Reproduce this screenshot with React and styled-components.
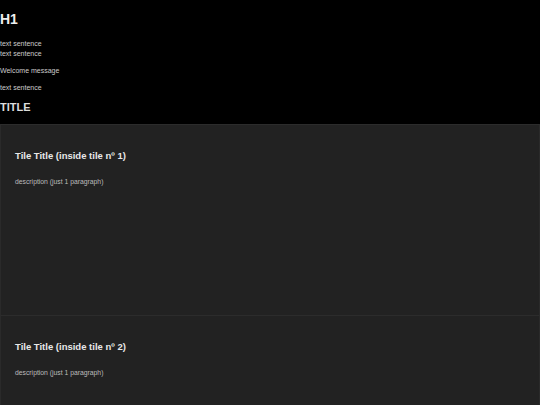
import React from "react";
import styled, { createGlobalStyle } from "styled-components";

const GlobalStyle = createGlobalStyle`
  html, body {
    margin: 0;
    padding: 0;
    background: #000;
  }
  body {
    font-family: "Liberation Sans", Arial, sans-serif;
    color: #ddd;
  }
`;

const Page = styled.div`
  width: 540px;
  min-height: 405px;
  background: #000;
  overflow: hidden;
`;

const Header = styled.header`
  display: flex;
  flex-direction: column;
  padding: 11px 0 0 0;
`;

const H1 = styled.h1`
  margin: 0;
  font-size: 14px;
  line-height: 16px;
  font-weight: bold;
  color: #eee;
`;

const Text = styled.p`
  margin: ${(p) => p.$mt || 0}px 0 0 0;
  font-size: 7px;
  line-height: 10px;
  color: #ccc;
`;

const Title = styled.h2`
  margin: 7px 0 0 0;
  font-size: 11px;
  line-height: 14px;
  font-weight: bold;
  color: #ddd;
`;

const Tiles = styled.div`
  display: flex;
  flex-direction: column;
  margin-top: 10px;
`;

const Tile = styled.section`
  box-sizing: border-box;
  height: 191px;
  background: #222;
  border-top: 1px solid #2c2c2c;
  border-left: 1px solid #2a2a2a;
  border-right: 1px solid #2a2a2a;
  padding: 24px 14px;
`;

const TileTitle = styled.h3`
  margin: 0;
  font-size: 9.5px;
  line-height: 14px;
  font-weight: bold;
  color: #e8e8e8;
`;

const TileText = styled.p`
  margin: 15px 0 0 0;
  font-size: 6.8px;
  line-height: 8px;
  color: #bbb;
`;

export default function App() {
  return (
    <Page>
      <GlobalStyle />
      <Header>
        <H1>H1</H1>
        <Text $mt={12}>text sentence</Text>
        <Text>text sentence</Text>
        <Text $mt={7}>Welcome message</Text>
        <Text $mt={7}>text sentence</Text>
        <Title>TITLE</Title>
      </Header>
      <Tiles>
        {[1, 2].map((n) => (
          <Tile key={n}>
            <TileTitle>Tile Title (inside tile nº {n})</TileTitle>
            <TileText>description (just 1 paragraph)</TileText>
          </Tile>
        ))}
      </Tiles>
    </Page>
  );
}
